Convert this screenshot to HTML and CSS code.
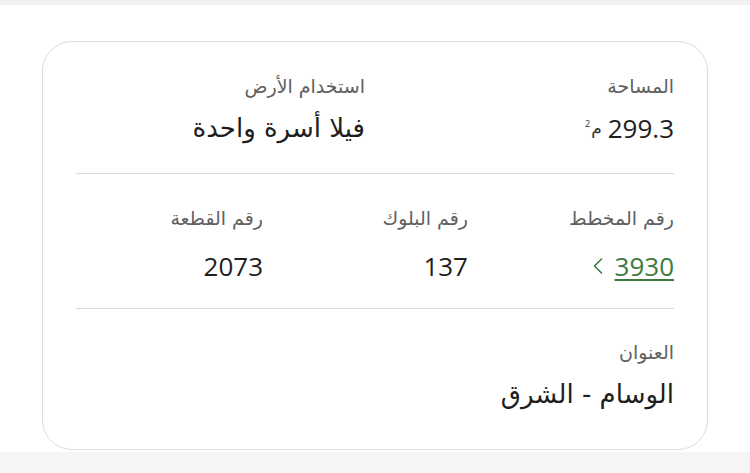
FILE: index.html
```html
<!DOCTYPE html>
<html lang="ar" dir="rtl">
<head>
    <meta charset="UTF-8">
    <meta name="viewport" content="width=device-width, initial-scale=1.0">
    <title>بيانات القطعة</title>
    <link rel="stylesheet" href="styles.css">
</head>
<body>
    <div class="topbar"></div>
    <main class="page">
        <section class="card">
            <div class="row row-two">
                <div class="field">
                    <div class="label">المساحة</div>
                    <div class="value"><span class="num">299.3</span> <span class="unit">م<sup>2</sup></span></div>
                </div>
                <div class="field">
                    <div class="label">استخدام الأرض</div>
                    <div class="value">فيلا أسرة واحدة</div>
                </div>
            </div>
            <div class="row row-three">
                <div class="field">
                    <div class="label">رقم المخطط</div>
                    <div class="value">
                        <a class="plan-link num" href="#">3930</a>
                        <svg class="chevron" width="10" height="16" viewBox="0 0 10 16"><polyline points="8.5,1 1.5,8 8.5,15" fill="none" stroke="#3c7a3e" stroke-width="1.6" stroke-linecap="round" stroke-linejoin="round"/></svg>
                    </div>
                </div>
                <div class="field">
                    <div class="label">رقم البلوك</div>
                    <div class="value"><span class="num">137</span></div>
                </div>
                <div class="field">
                    <div class="label">رقم القطعة</div>
                    <div class="value"><span class="num">2073</span></div>
                </div>
            </div>
            <div class="row row-last">
                <div class="field">
                    <div class="label">العنوان</div>
                    <div class="value">الوسام - الشرق</div>
                </div>
            </div>
        </section>
    </main>
    <div class="bottom"></div>
</body>
</html>
```

FILE: styles.css
```css
body {
    margin: 0;
    padding: 0;
    background-color: #ffffff;
    font-family: "DejaVu Sans", sans-serif;
    color: #222;
}
.topbar {
    height: 5px;
    background-color: #f2f2f2;
}
.page {
    padding: 36px 42px 0;
}
.card {
    border: 1.5px solid #dcdcdc;
    border-radius: 30px;
    padding: 0 33px;
    background-color: #fff;
}
.row {
    display: grid;
    border-bottom: 1px solid #dadada;
    padding: 30px 0 25px;
}
.row-two {
    grid-template-columns: 309px 1fr;
}
.row-three {
    grid-template-columns: 206px 205px 1fr;
    padding: 30px 0 22px;
}
.row-three .field {
    gap: 14px;
}
.row-last {
    border-bottom: none;
    padding: 29px 0 35px;
}
.field {
    display: flex;
    flex-direction: column;
    gap: 8px;
}
.label {
    font-size: 19px;
    line-height: 28px;
    color: #606060;
}
.value {
    display: flex;
    align-items: center;
    gap: 12px;
    height: 40px;
    font-size: 26px;
    line-height: 40px;
    color: #1e1e1e;
}
.num {
    font-family: "Open Sans", sans-serif;
    font-size: 26px;
    line-height: 40px;
    direction: ltr;
}
.unit {
    font-size: 17px;
    line-height: 40px;
    color: #333;
    margin-right: -6px;
}
.unit sup {
    font-family: "Open Sans", sans-serif;
    font-size: 9px;
    line-height: 0;
    margin-right: 1px;
}
.plan-link {
    color: #3c7a3e;
    text-decoration: underline;
    text-decoration-thickness: 1.5px;
    text-underline-offset: 3px;
}
.chevron {
    display: block;
}
.bottom {
    height: 30px;
    background-color: #f5f5f5;
    margin-top: 2px;
}
```
